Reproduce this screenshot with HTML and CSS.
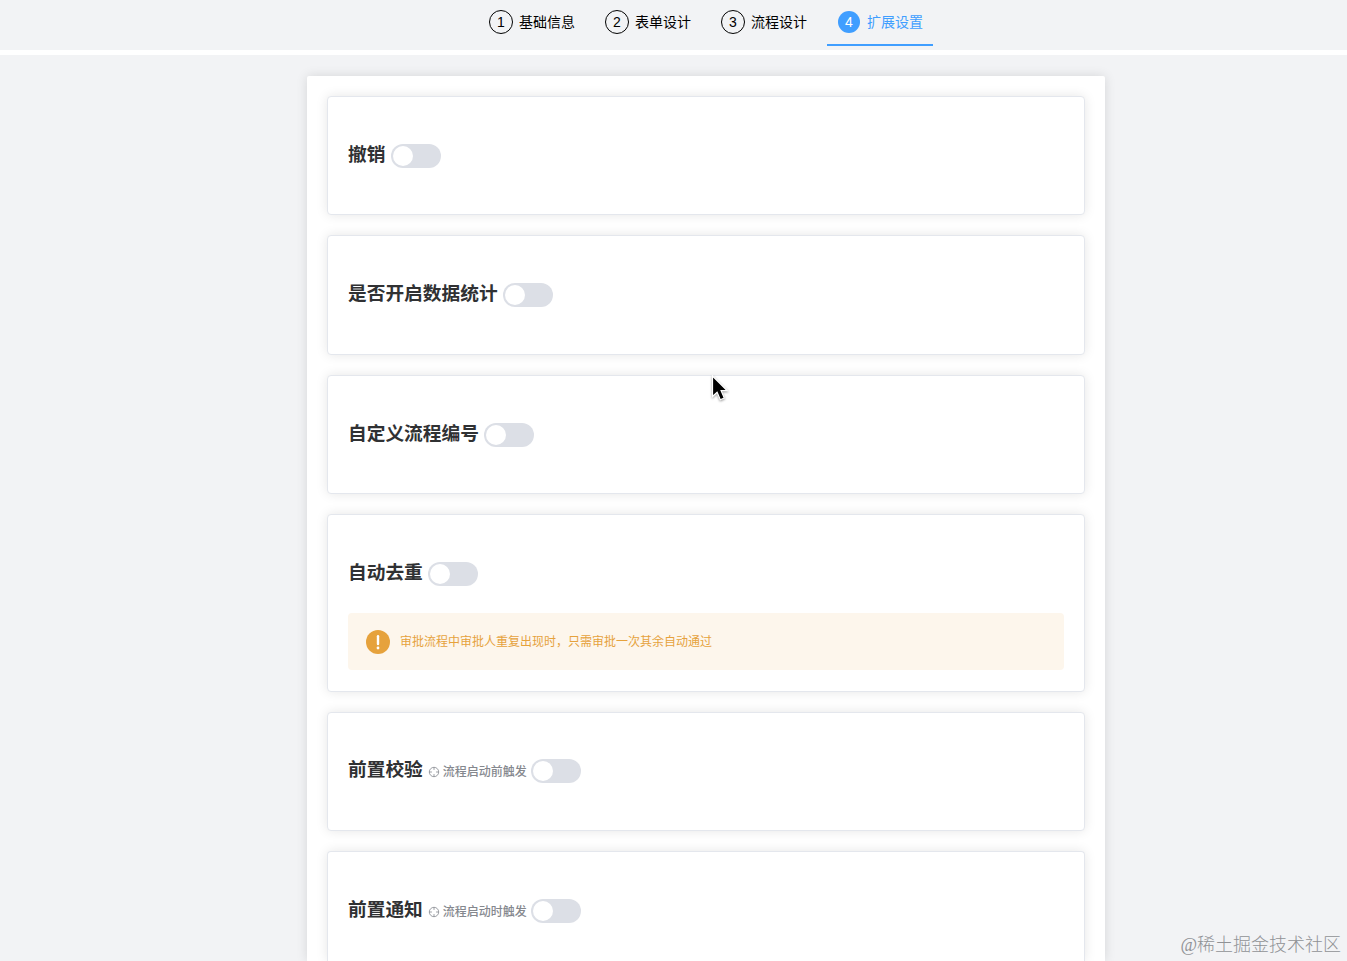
FILE: index.html
```html
<!DOCTYPE html>
<html lang="zh-CN">
<head>
<meta charset="utf-8">
<title>扩展设置</title>
<link rel="stylesheet" href="styles.css">
</head>
<body>
<header class="steps">
  <div class="step"><span class="num">1</span><span class="label">基础信息</span></div>
  <div class="step"><span class="num">2</span><span class="label">表单设计</span></div>
  <div class="step"><span class="num">3</span><span class="label">流程设计</span></div>
  <div class="step active"><span class="num">4</span><span class="label">扩展设置</span></div>
</header>
<main class="panel">
  <section class="card"><h3 class="row"><span class="title">撤销</span><span class="switch"></span></h3></section>
  <section class="card"><h3 class="row"><span class="title">是否开启数据统计</span><span class="switch"></span></h3></section>
  <section class="card"><h3 class="row"><span class="title">自定义流程编号</span><span class="switch"></span></h3></section>
  <section class="card tall">
    <h3 class="row"><span class="title">自动去重</span><span class="switch"></span></h3>
    <div class="alert">
      <svg class="warn" viewBox="0 0 24 24"><circle cx="12" cy="12" r="12" fill="#e6a23c"/><path d="M12 6.2v7.8" stroke="#fff" stroke-width="2.4" stroke-linecap="round"/><circle cx="12" cy="18" r="1.4" fill="#fff"/></svg>
      <span class="label">审批流程中审批人重复出现时，只需审批一次其余自动通过</span>
    </div>
  </section>
  <section class="card hinted"><h3 class="row"><span class="title">前置校验</span><span class="hint"><svg class="aim" viewBox="0 0 12 12"><circle cx="6" cy="6" r="4.7"/><path d="M6 1.3v2.6M6 8.1v2.6M1.3 6h2.6M8.1 6h2.6"/></svg><span class="label">流程启动前触发</span></span><span class="switch"></span></h3></section>
  <section class="card hinted last"><h3 class="row"><span class="title">前置通知</span><span class="hint"><svg class="aim" viewBox="0 0 12 12"><circle cx="6" cy="6" r="4.7"/><path d="M6 1.3v2.6M6 8.1v2.6M1.3 6h2.6M8.1 6h2.6"/></svg><span class="label">流程启动时触发</span></span><span class="switch"></span></h3></section>
</main>
<svg class="cursor" viewBox="0 0 20 30"><path d="M2.5 2v20.5l4.6-4.3 3.2 7.6 4-1.8-3.2-7.3h6.2z" fill="#000" stroke="#fff" stroke-width="1.2"/></svg>
<div class="watermark">@稀土掘金技术社区</div>
</body>
</html>
```
FILE: styles.css
```css
* { box-sizing: border-box; }
body {
  margin: 0;
  height: 961px;
  overflow: hidden;
  position: relative;
  background: #f2f3f5;
  font-family: "Liberation Sans", "Noto Sans CJK SC", sans-serif;
  color: #303133;
}
.steps {
  height: 55px;
  border-bottom: 5px solid #fff;
  display: flex;
  justify-content: center;
  gap: 10px;
  padding-left: 65px;
  font-size: 14px;
  color: #000;
}
.step {
  width: 106px;
  height: 46px;
  padding: 0 0 2px 10px;
  display: flex;
  align-items: center;
  gap: 6px;
  white-space: nowrap;
}
.label { padding-bottom: 2px; }
.num {
  width: 24px;
  height: 24px;
  border: 1px solid #000;
  border-radius: 50%;
  display: flex;
  align-items: center;
  justify-content: center;
}
.active {
  color: #409eff;
  border-bottom: 2px solid #409eff;
  padding-bottom: 0;
}
.active .num {
  border-color: transparent;
  background: #409eff;
  background-clip: padding-box;
  color: #fff;
}
.panel {
  width: 798px;
  height: 885px;
  margin: 21px 0 0 307px;
  padding: 20px 20px 0;
  background: #fff;
  border-radius: 2px 2px 0 0;
  box-shadow: 0 0 12px rgba(0, 0, 0, .12);
}
.card {
  height: 119.3px;
  margin-bottom: 20.2px;
  padding: 47px 20px 0;
  border: 1px solid #e4e7ed;
  border-radius: 4px;
  background: #fff;
  box-shadow: 0 0 12px rgba(0, 0, 0, .1);
}
.tall { height: 177.4px; }
.hinted {
  height: 119px;
  margin-bottom: 20px;
  padding-top: 46.2px;
}
.last {
  height: 110px;
  margin-bottom: 0;
  padding-top: 47px;
  border-bottom: 0;
  border-radius: 4px 4px 0 0;
}
.row {
  margin: 0;
  height: 24px;
  display: flex;
  align-items: center;
  font-size: 18.72px;
}
.title {
  line-height: 24px;
  padding-bottom: 2px;
  white-space: nowrap;
}
.switch {
  width: 50px;
  height: 24px;
  margin-left: 5.5px;
  border-radius: 12px;
  background: #dcdfe6;
  padding: 2px;
}
.switch::before {
  content: "";
  display: block;
  width: 20px;
  height: 20px;
  border-radius: 50%;
  background: #fff;
}
.hint {
  display: flex;
  align-items: center;
  gap: 3px;
  margin-left: 5px;
  font-size: 12px;
  font-weight: 500;
  color: #85888e;
  white-space: nowrap;
}
.hint + .switch { margin-left: 4px; }
.aim {
  width: 12px;
  height: 12px;
  margin-top: 2px;
  fill: none;
  stroke: #909399;
  stroke-width: .9;
}
.alert {
  height: 57px;
  margin-top: 27px;
  padding-left: 18px;
  display: flex;
  align-items: center;
  gap: 10px;
  border-radius: 4px;
  background: #fdf6ec;
  color: #e6a23c;
  font-size: 12px;
}
.warn { width: 24px; height: 24px; }
.cursor {
  position: absolute;
  left: 710px;
  top: 374px;
  width: 20px;
  height: 30px;
  filter: drop-shadow(0 1px 1px rgba(0, 0, 0, .4));
}
.watermark {
  position: absolute;
  right: 6px;
  bottom: 3px;
  font-family: "Liberation Serif", "Noto Sans CJK SC", serif;
  font-size: 18px;
  line-height: 26px;
  font-weight: 300;
  color: #909296;
}
```
